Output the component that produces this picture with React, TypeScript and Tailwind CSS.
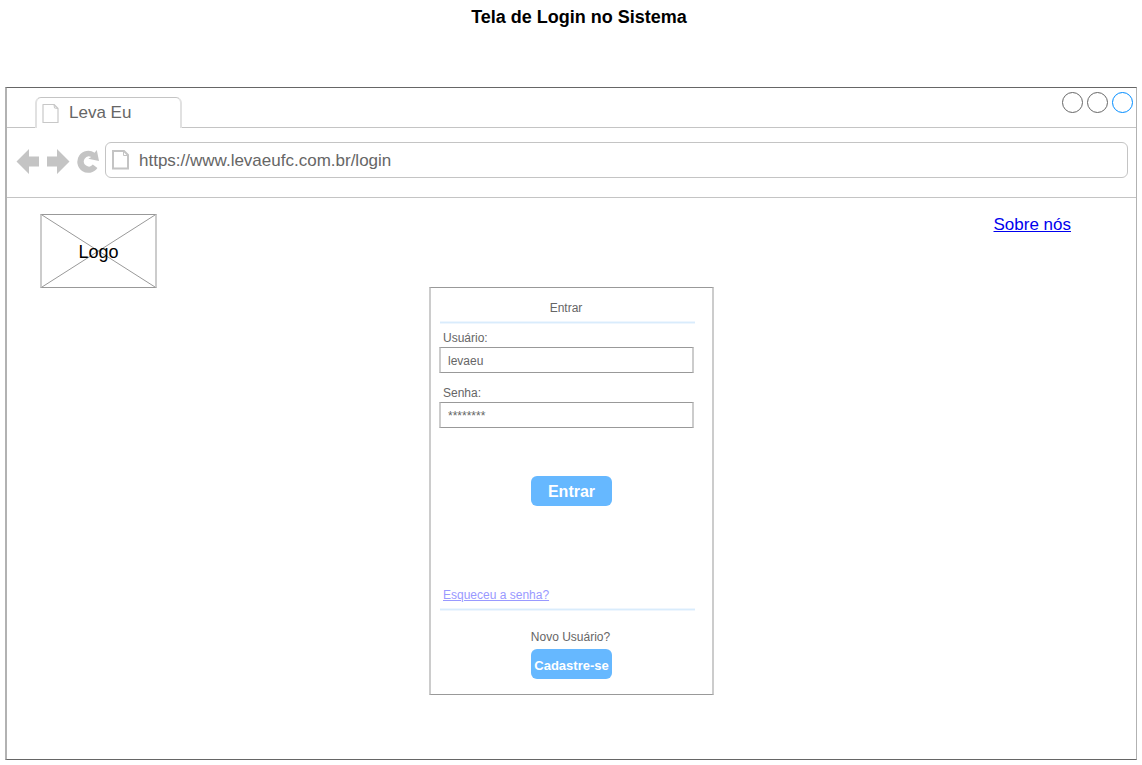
import type { ReactNode } from 'react';

function PageIcon({ bold = false }: { bold?: boolean }) {
  return bold ? (
    <svg className="h-5 w-[18px] shrink-0" viewBox="0 0 18 20" fill="none" stroke="#c4c4c4" aria-hidden="true">
      <path d="M1 1H12L16 5V18.5H1Z" strokeWidth="2" />
      <path d="M11.5 1.5V5.5H16" strokeWidth="1" />
    </svg>
  ) : (
    <svg className="h-5 w-[18px] shrink-0" viewBox="0 0 18 20" fill="none" stroke="#c8c8c8" aria-hidden="true">
      <path d="M1 1.5H12L16 5.5V19.5H1Z" strokeWidth="1.2" strokeLinejoin="round" />
      <path d="M12 1.5L12.5 5L16 5.5" strokeWidth="1" />
    </svg>
  );
}

function NavButton({ label, children }: { label: string; children: ReactNode }) {
  return (
    <button type="button" aria-label={label} className="shrink-0 text-[#c4c4c4]">
      {children}
    </button>
  );
}

function Field({ id, label, value }: { id: string; label: string; value: string }) {
  return (
    <div className="flex flex-col gap-px">
      <label htmlFor={id} className="pl-1 leading-4">
        {label}
      </label>
      <input
        id={id}
        type="text"
        defaultValue={value}
        className="h-[26px] w-full border-x-2 border-y border-x-[#ccc] border-y-[#999] bg-white px-[7px] pt-[2px] text-xs text-[#666] outline-none"
      />
    </div>
  );
}

function Divider() {
  return <hr className="mt-[5px] ml-px h-[3px] border-y border-[#eef6fe] bg-[#d9ecfc]" />;
}

export default function App() {
  return (
    <div className="bg-white px-[5px] pt-[7px] pb-[5px] font-['Liberation_Sans',Arial,sans-serif] text-[#666]">
      <h1 className="h-20 pl-4 text-center text-lg leading-5 font-bold text-black">Tela de Login no Sistema</h1>

      <div className="border border-l-2 border-x-[#b2b2b2] border-y-[#666]">
        <div className="flex h-10 items-end justify-between border-b border-[#c4c4c4]">
          <div className="-mb-px ml-7 flex h-[31px] w-[147px] items-center gap-[9px] rounded-t-md border-x-2 border-t border-x-[#e1e1e1] border-t-[#c4c4c4] bg-white pl-[5px] text-[17px] leading-5">
            <PageIcon />
            <span>Leva Eu</span>
          </div>
          <div className="mr-[3px] flex gap-1 self-start pt-1">
            <button type="button" aria-label="Minimizar" className="size-[21px] rounded-full border border-[#666]" />
            <button type="button" aria-label="Maximizar" className="size-[21px] rounded-full border border-[#666]" />
            <button type="button" aria-label="Fechar" className="size-[21px] rounded-full border border-[#008cff]" />
          </div>
        </div>

        <div className="flex items-center border-b border-[#c4c4c4] pt-[14px] pr-2 pb-[19px] pl-[9px]">
          <div className="flex items-center gap-[6px] pt-[2px] pr-[6px]">
            <NavButton label="Voltar">
              <svg className="block h-[26px] w-6" viewBox="0 0 24 26" fill="currentColor">
                <path d="M.5 13.5L13 1V8.5H23V18.5H13V26Z" />
              </svg>
            </NavButton>
            <NavButton label="Avançar">
              <svg className="block h-[26px] w-6" viewBox="0 0 24 26" fill="currentColor">
                <path d="M23.5 13.5L11 1V8.5H1V18.5H11V26Z" />
              </svg>
            </NavButton>
            <NavButton label="Recarregar">
              <svg className="block h-[26px] w-[23px]" viewBox="0 0 23 26" fill="currentColor">
                <path d="M20.8 2L23 13L12.3 10.8L15.2 9A5 5 0 1 0 16.8 16.6L21.4 20A11 11 0 1 1 18.6 4.8Z" />
              </svg>
            </NavButton>
          </div>
          <div className="flex h-9 min-w-0 flex-1 items-center gap-[9px] rounded-md border border-[#c4c4c4] pl-[6px]">
            <PageIcon bold />
            <input
              type="text"
              aria-label="Endereço"
              defaultValue="https://www.levaeufc.com.br/login"
              className="h-full min-w-0 flex-1 bg-transparent pt-[2px] text-[17px] outline-none"
            />
          </div>
        </div>

        <header className="flex h-[89px] items-start justify-between pt-4 pr-[65px] pl-[33px]">
          <div className="grid h-[74px] w-[117px] place-items-center border-x-2 border-y border-x-[#ccc] border-y-[#999]">
            <svg
              className="col-start-1 row-start-1 size-full"
              viewBox="0 0 113 72"
              preserveAspectRatio="none"
              stroke="#999"
              aria-hidden="true"
            >
              <path d="M0 0L113 72M113 0L0 72" />
            </svg>
            <span className="col-start-1 row-start-1 pt-[2px] text-lg leading-5 text-black">Logo</span>
          </div>
          <a href="#sobre" className="text-[17px] leading-[22px] text-[#0000ee] underline">
            Sobre nós
          </a>
        </header>

        <main className="pb-16">
          <form
            className="mx-auto flex w-[285px] flex-col border-x-2 border-y border-x-[#ccc] border-y-[#999] pt-3 pb-[15px] text-xs leading-4"
            onSubmit={(event) => event.preventDefault()}
          >
            <div className="pr-[17px] pl-2">
              <h2 className="pr-[2px] text-center">Entrar</h2>
              <Divider />
              <div className="flex flex-col gap-3 pt-[6px] pr-px">
                <Field id="usuario" label="Usuário:" value="levaeu" />
                <Field id="senha" label="Senha:" value="********" />
              </div>
            </div>
            <button
              type="submit"
              className="mt-12 h-[30px] w-[81px] self-center rounded-md bg-[#66b8ff] pt-[2px] text-base font-bold text-white"
            >
              Entrar
            </button>
            <div className="mt-20 pt-px pr-[17px] pl-2">
              <a href="#recuperar" className="ml-1 block w-fit text-[#9999ff] underline">
                Esqueceu a senha?
              </a>
              <Divider />
            </div>
            <p className="mt-[18px] pr-[2px] text-center">Novo Usuário?</p>
            <button
              type="button"
              className="mt-1 h-[30px] w-[81px] self-center rounded-md bg-[#66b8ff] pt-1 text-[13px] font-bold text-white"
            >
              Cadastre-se
            </button>
          </form>
        </main>
      </div>
    </div>
  );
}
